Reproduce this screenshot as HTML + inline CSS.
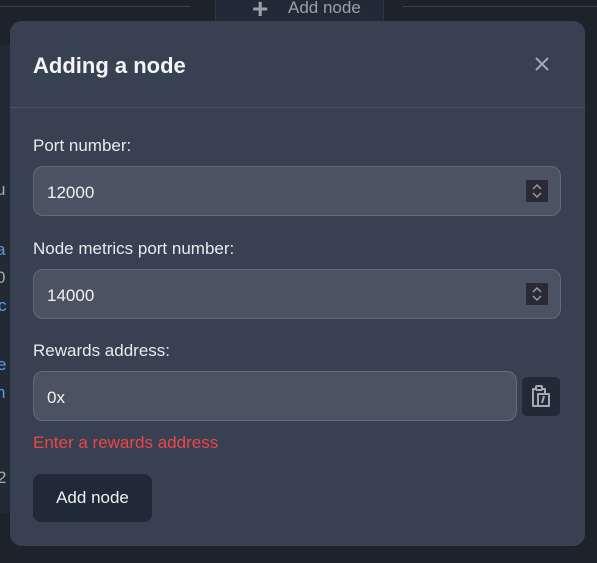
<!DOCTYPE html>
<html><head><style>
*{box-sizing:border-box;margin:0;padding:0}
body{width:597px;height:563px;background:#1d232a;font-family:"Liberation Sans","DejaVu Sans",sans-serif;position:relative;overflow:hidden;color:#e5e7eb}
.abs{position:absolute}
.modal{left:10px;top:21px;width:575px;height:525px;background:#384152;border-radius:12px}
.lbl{font-size:17px;color:#e8eaee}
.inp{background:#4b5363;border:1px solid #636b7a;border-radius:10px;height:50px;font-size:17px;color:#f0f1f3;padding:16px 0 0 13px}
.spin{width:22px;height:22px;background:#2a2a36;}
</style></head><body>
<div class="abs" style="left:0;top:6px;width:190px;height:1px;background:#3a414c"></div>
<div class="abs" style="left:403px;top:6px;width:194px;height:1px;background:#3a414c"></div>
<div class="abs" style="left:215px;top:0;width:169px;height:21px;background:#222a38;border-left:1px solid #2e3644;border-right:1px solid #2e3644"></div>
<div class="abs" style="left:252px;top:-3px;font-size:28px;color:#9aa0aa;line-height:24px;font-weight:bold">+</div>
<div class="abs" style="left:288px;top:-2px;font-size:17px;color:#9aa0aa">Add node</div>
<div class="abs" style="left:0;top:45px;width:10px;height:468px;background:#232a35"></div>
<div class="abs" style="left:-4px;top:180px;font-size:17px;color:#aaa">u</div>
<div class="abs" style="left:-4px;top:240px;font-size:17px;color:#5b9be0">a</div>
<div class="abs" style="left:-4px;top:268px;font-size:17px;color:#aaa">0</div>
<div class="abs" style="left:-2px;top:296px;font-size:17px;color:#5b9be0">c</div>
<div class="abs" style="left:-3px;top:355px;font-size:17px;color:#5b9be0">e</div>
<div class="abs" style="left:-4px;top:383px;font-size:17px;color:#5b9be0">n</div>
<div class="abs" style="left:-3px;top:468px;font-size:17px;color:#aaa">2</div>
<div class="abs modal">
  <div class="abs" style="left:23px;top:32px;font-size:22px;font-weight:bold;color:#f3f4f6">Adding a node</div>
  <svg class="abs" style="left:524px;top:35px" width="16" height="16"><path d="M2 2L14 14M14 2L2 14" stroke="#a4a9b3" stroke-width="2"/></svg>
  <div class="abs" style="left:0;top:86px;width:575px;height:1px;background:#4b5363"></div>
  <div class="abs lbl" style="left:23px;top:115px">Port number:</div>
  <div class="abs inp" style="left:23px;top:145px;width:528px">12000</div>
  <svg class="abs spin" style="left:516px;top:159px" viewBox="0 0 22 22"><path d="M7 9L11 5L15 9M7 13L11 17L15 13" stroke="#9a9aa6" stroke-width="1.5" fill="none"/></svg>
  <div class="abs lbl" style="left:23px;top:218px">Node metrics port number:</div>
  <div class="abs inp" style="left:23px;top:248px;width:528px">14000</div>
  <svg class="abs spin" style="left:516px;top:262px" viewBox="0 0 22 22"><path d="M7 9L11 5L15 9M7 13L11 17L15 13" stroke="#9a9aa6" stroke-width="1.5" fill="none"/></svg>
  <div class="abs lbl" style="left:23px;top:320px">Rewards address:</div>
  <div class="abs inp" style="left:23px;top:350px;width:484px">0x</div>
  <div class="abs" style="left:512px;top:356px;width:38px;height:39px;background:#222a38;border-radius:5px"></div>
  <svg class="abs" style="left:516px;top:361px" width="30" height="30" viewBox="0 0 30 30"><g stroke="#a4a9b3" stroke-width="2" fill="none" stroke-linejoin="round"><path d="M11 7H7V24H12"/><rect x="10" y="4" width="6" height="4" rx="1"/><path d="M16 7H19V11"/><path d="M12 12H23V24H12Z"/><path d="M18 14L16 21"/></g></svg>
  <div class="abs" style="left:23px;top:412px;font-size:17px;color:#ef4444">Enter a rewards address</div>
  <div class="abs" style="left:23px;top:453px;width:119px;height:48px;background:#1f2937;border-radius:8px;font-size:17px;color:#f0f1f3;text-align:center;line-height:48px">Add node</div>
</div>
</body></html>
